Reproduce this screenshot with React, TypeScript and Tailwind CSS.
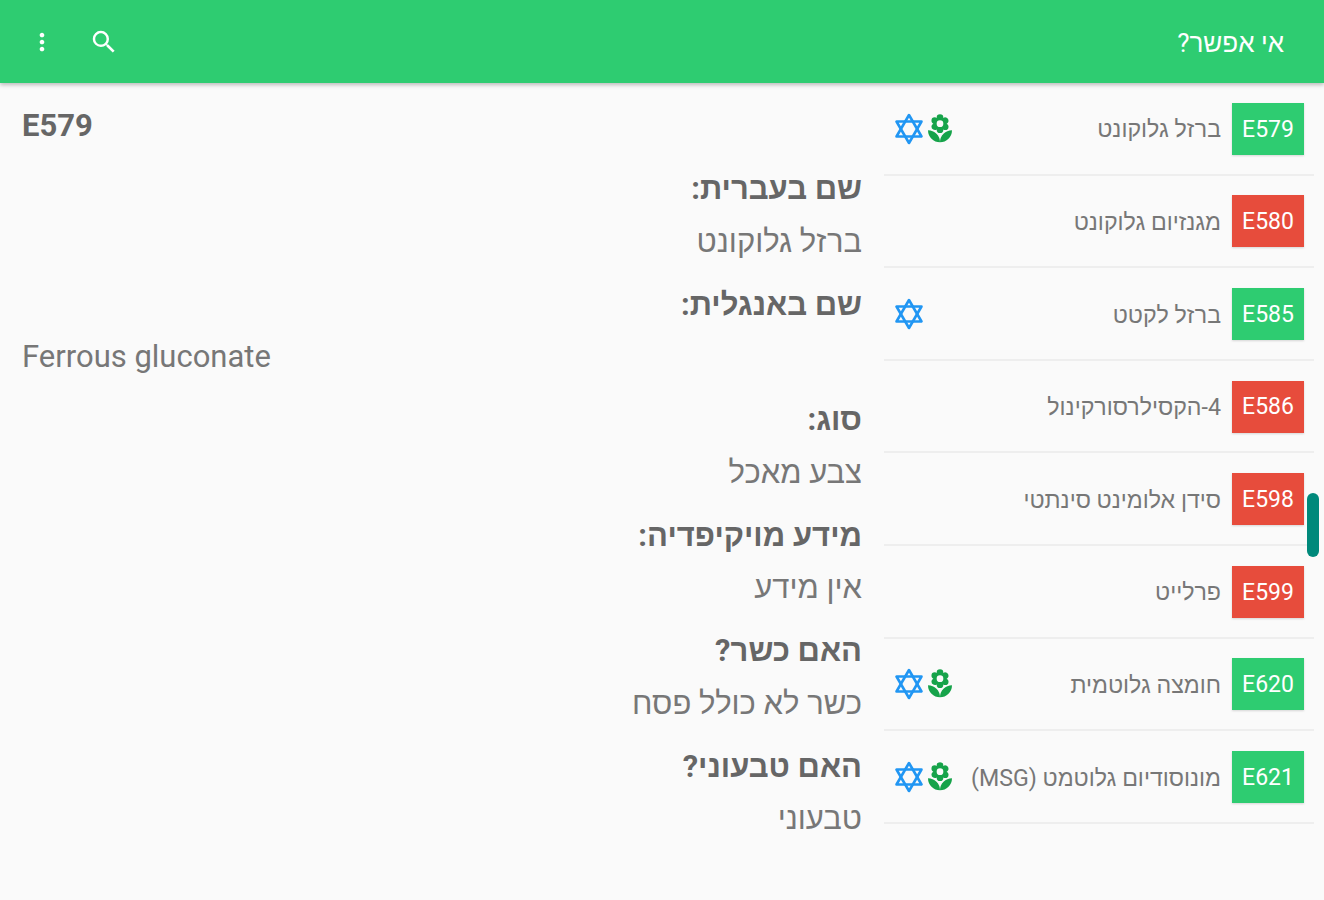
import { MdLocalFlorist, MdMoreVert, MdSearch } from "react-icons/md";

const rows: [string, string, boolean, boolean, boolean][] = [
  ["E579", "ברזל גלוקונט", true, true, true],
  ["E580", "מגנזיום גלוקונט", false, false, false],
  ["E585", "ברזל לקטט", true, true, false],
  ["E586", "4-הקסילרסורקינול", false, false, false],
  ["E598", "סידן אלומינט סינתטי", false, false, false],
  ["E599", "פרלייט", false, false, false],
  ["E620", "חומצה גלוטמית", true, true, true],
  ["E621", "מונוסודיום גלוטמט (MSG)", true, true, true],
];

const details: [string, string][] = [
  ["שם בעברית:", "ברזל גלוקונט"],
  ["שם באנגלית:", "Ferrous gluconate"],
  ["סוג:", "צבע מאכל"],
  ["מידע מויקיפדיה:", "אין מידע"],
  ["האם כשר?", "כשר לא כולל פסח"],
  ["האם טבעוני?", "טבעוני"],
];

function Star() {
  return (
    <svg width="30" height="32" viewBox="0 0 30 32" fill="none" stroke="#2196f3" strokeWidth="2.6" strokeLinejoin="round">
      <path d="M15 2 L27.5 23.5 H2.5 Z" />
      <path d="M15 30 L2.5 8.5 H27.5 Z" />
    </svg>
  );
}

export default function App() {
  return (
    <div className="relative flex h-[900px] flex-col overflow-hidden bg-[#fafafa] font-['Roboto','Liberation_Sans',sans-serif]">
      <header className="z-10 flex h-[83px] shrink-0 items-center justify-between bg-[#2ecc71] pl-[28px] pr-[40px] text-white shadow-[0_2px_4px_rgba(0,0,0,0.25)]">
        <div className="flex items-center gap-[33px]">
          <MdMoreVert size={28} />
          <MdSearch size={30} />
        </div>
        <div dir="rtl" className="pt-[3px] text-[26px]">אי אפשר?</div>
      </header>
      <main className="flex min-h-0 flex-1">
        <section className="w-[884px] shrink-0 px-[22px] pt-[22px]">
          <div className="mb-[21px] text-[31px] font-bold leading-[42px] text-[#666666]">E579</div>
          {details.map(([label, value]) => (
            <div key={label} dir="rtl" className="mb-[21px]">
              <div className="mb-[10.5px] text-[31px] font-bold leading-[42px] text-[#666666]">{label}</div>
              <div className="text-[31px] leading-[42px] text-[#777777]">
                {value === "Ferrous gluconate" ? <div dir="ltr">{value}</div> : value}
              </div>
            </div>
          ))}
        </section>
        <section className="w-[430px] shrink-0">
          {rows.map(([code, name, green, star, flower]) => (
            <div key={code} className="flex h-[92.6px] items-center px-[10px] pb-[1px] shadow-[inset_0_-2px_0_#eeeeee]">
              <div className="flex w-[70px] items-center gap-[5px]">
                {star && <Star />}
                {flower && <MdLocalFlorist size={32} className="-ml-[5px] text-[#16a34a]" />}
              </div>
              <div dir="rtl" className="flex-1 pl-[2px] pt-[2px] text-[23.2px] text-[#777777]">{name}</div>
              <div className={`ml-[11px] flex h-[52px] w-[72px] items-center justify-center pt-[2px] text-[23px] text-white shadow-[0_1px_2px_rgba(0,0,0,0.15)] ${green ? "bg-[#2ecc71]" : "bg-[#e74c3c]"}`}>
                {code}
              </div>
            </div>
          ))}
        </section>
      </main>
      <div className="absolute left-[1307px] top-[493px] h-[64px] w-[12px] rounded-full bg-[#00897b]" />
    </div>
  );
}
